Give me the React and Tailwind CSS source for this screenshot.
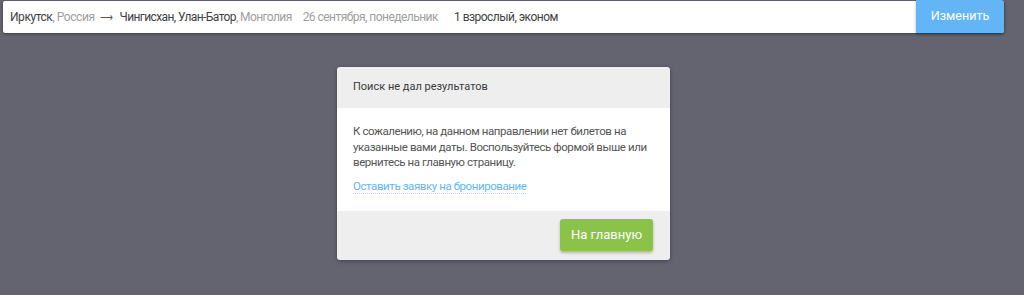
export default function App() {
  return (
    <div className="w-[1024px] h-[295px] bg-[#63646f] overflow-hidden" style={{ fontFamily: "Roboto, 'Liberation Sans', sans-serif" }}>
      <div className="pl-[3px] pr-[20px] pt-[1px]">
        <div className="flex h-[32px] bg-white shadow-[0_1px_3px_rgba(0,0,0,0.4)] rounded-[2px]">
          <div className="flex-1 flex items-center pl-[7px] text-[12px] text-[#3f3f3f] whitespace-nowrap">
            <span className="tracking-[-0.45px]">Иркутск<span className="text-[#9e9e9e]">, Россия</span></span>
            <span className="ml-[5px] mr-[6px] w-[14px] text-[#555] text-[9px] leading-none">⟶</span>
            <span className="tracking-[-0.6px]">Чингисхан, Улан-Батор<span className="text-[#9e9e9e]">, Монголия</span></span>
            <span className="ml-[11px] tracking-[-0.53px] text-[#9e9e9e]">26 сентября, понедельник</span>
            <span className="ml-[16px] tracking-[-0.53px]">1 взрослый, эконом</span>
          </div>
          <button className="w-[88px] -mt-[1px] h-[33px] bg-[#64b5f6] text-white text-[12.5px] rounded-r-[3px] shadow-[0_1px_3px_rgba(0,0,0,0.3)]">Изменить</button>
        </div>
      </div>
      <div className="flex justify-center mt-[34px] pr-[17px]">
        <div className="w-[333px] rounded-[3px] overflow-hidden shadow-[0_1px_4px_rgba(0,0,0,0.35)]">
          <div className="h-[41px] bg-[#eeeeee] flex items-center px-[16px] text-[11px] text-[#3a3a3a]">Поиск не дал результатов</div>
          <div className="bg-white pl-[16px] pr-[14px] pt-[16px] pb-[16px] text-[11.5px] tracking-[-0.42px] leading-[15.5px] text-[#555]">
            <p>К сожалению, на данном направлении нет билетов на указанные вами даты. Воспользуйтесь формой выше или вернитесь на главную страницу.</p>
            <p className="mt-[8.5px]"><span className="text-[#64b5f6] border-b border-dotted border-[#b5d9f7]">Оставить заявку на бронирование</span></p>
          </div>
          <div className="h-[49px] bg-[#eeeeee] flex items-center justify-end pr-[17px]">
            <button className="w-[93px] h-[32px] bg-[#8bc34a] text-white text-[13px] rounded-[3px] shadow-[0_2px_3px_rgba(0,0,0,0.25)]">На главную</button>
          </div>
        </div>
      </div>
    </div>
  );
}
